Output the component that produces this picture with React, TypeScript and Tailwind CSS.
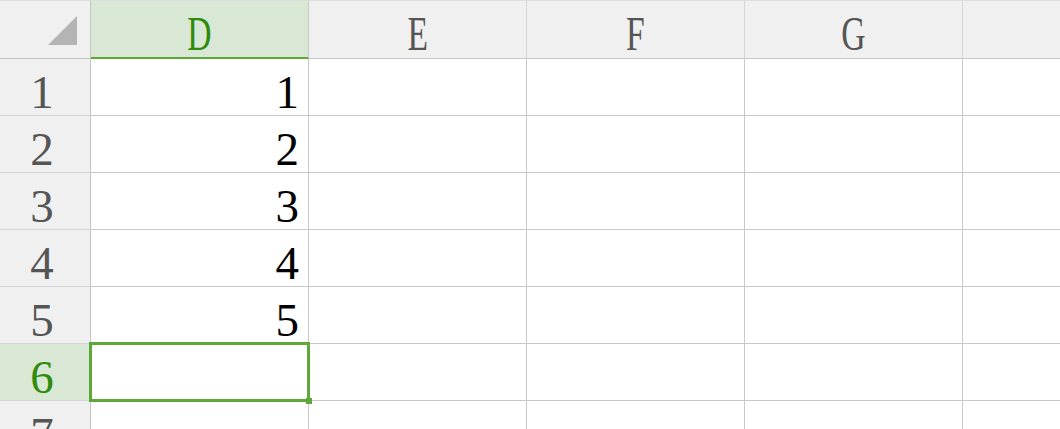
import React from "react";

const cols = ["D", "E", "F", "G", ""];
const rows = [1, 2, 3, 4, 5, 6, 7];

export default function App() {
  return (
    <div className="relative w-[1060px] h-[429px] overflow-hidden bg-white font-['Liberation_Serif','Times_New_Roman',serif]">
      {/* header row */}
      <div className="flex h-[59px] border-t border-[#dedede] bg-[#f0f0f0]">
        <div className="relative w-[91px] shrink-0 h-[58px] border-r border-b border-[#c4c4c4] flex">
          <svg
            className="ml-[48px] mt-[15px]"
            width="29"
            height="29"
            viewBox="0 0 29 29"
          >
            <polygon points="29,0 29,29 0,29" fill="#b4b4b4" />
          </svg>
        </div>
        {cols.map((c, i) => (
          <div
            key={i}
            className={
              "relative w-[218px] shrink-0 h-[58px] border-r border-b flex justify-center " +
              (i === 0
                ? "bg-[#d9e8d4] border-r-[#c8c8c8] border-b-[#5ea83a] text-[#2f8b0c]"
                : "border-r-[#d6d6d6] border-b-[#c6c6c6] text-[#555555]")
            }
          >
            <span className="text-[48px] leading-[58px] translate-y-[4px] scale-x-[0.7] inline-block">
              {c}
            </span>
            {i === 0 && (
              <div className="absolute left-0 right-0 bottom-[-1px] h-[2px] bg-[#5ea83a]" />
            )}
          </div>
        ))}
      </div>

      {/* body rows */}
      {rows.map((r) => {
        const sel = r === 6;
        return (
          <div key={r} className="flex h-[57px]">
            <div
              className={
                "w-[91px] shrink-0 h-[57px] border-r border-b border-r-[#c4c4c4] border-b-[#d4d4d4] flex justify-center pr-[6px] " +
                (sel ? "bg-[#d9e8d4] text-[#2f8b0c]" : "bg-[#f0f0f0] text-[#555555]")
              }
            >
              <span className="text-[47px] leading-[56px] translate-y-[5px] inline-block">
                {r}
              </span>
            </div>
            {cols.map((c, i) => (
              <div
                key={i}
                className="w-[218px] shrink-0 h-[57px] border-r border-b border-[#c8c8c8] flex justify-end pr-[9px] text-black"
              >
                {i === 0 && r <= 5 && (
                  <span className="text-[47px] leading-[56px] translate-y-[5px] inline-block">
                    {r}
                  </span>
                )}
              </div>
            ))}
          </div>
        );
      })}

      {/* selection overlay on D6 */}
      <div className="absolute left-[89px] top-[342px] w-[221px] h-[60px] border-[3px] border-[#5ea83a]" />
      <div className="absolute left-[306px] top-[398px] w-[6px] h-[6px] bg-[#5ea83a]" />
    </div>
  );
}
